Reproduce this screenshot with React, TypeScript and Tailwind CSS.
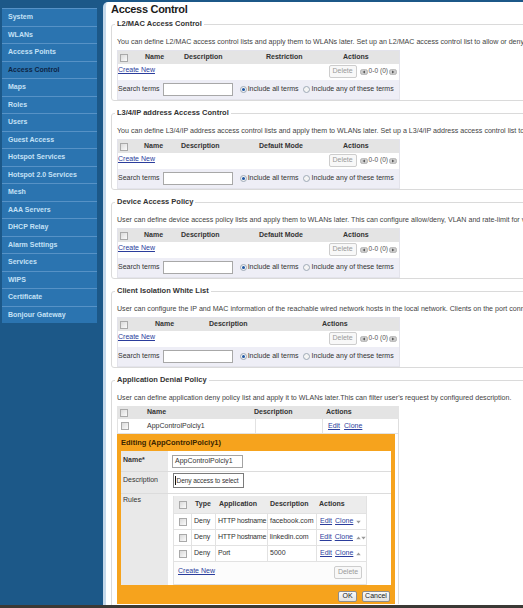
import React from "react";

const NAV = [
  "System",
  "WLANs",
  "Access Points",
  "Access Control",
  "Maps",
  "Roles",
  "Users",
  "Guest Access",
  "Hotspot Services",
  "Hotspot 2.0 Services",
  "Mesh",
  "AAA Servers",
  "DHCP Relay",
  "Alarm Settings",
  "Services",
  "WIPS",
  "Certificate",
  "Bonjour Gateway",
];

function Checkbox() {
  return (
    <span className="block w-[8px] h-[8px] border border-[#a9a9a9] bg-gradient-to-br from-[#dadada] to-[#fbfbfb]" />
  );
}

function Radio({ checked }: { checked?: boolean }) {
  return (
    <span className="flex items-center justify-center w-[7px] h-[7px] rounded-full border border-[#9ea9b6] bg-[#f4f4f4]">
      {checked && <span className="block w-[3px] h-[3px] rounded-full bg-[#1f57a5]" />}
    </span>
  );
}

function PagerIcon({ dir }: { dir: "l" | "r" }) {
  return (
    <svg width="8" height="6" viewBox="0 0 8 6">
      <rect x="0.4" y="0.4" width="7.2" height="5.2" rx="2.2" fill="#cdcdcd" stroke="#9a9a9a" strokeWidth="0.6" />
      {dir === "l" ? (
        <path d="M5 1.6 L2.6 3 L5 4.4Z" fill="#5a5a5a" />
      ) : (
        <path d="M3 1.6 L5.4 3 L3 4.4Z" fill="#5a5a5a" />
      )}
    </svg>
  );
}

function Pager() {
  return (
    <div className="flex items-center gap-[1px] text-[6.6px] leading-none text-[#555]">
      <PagerIcon dir="l" />
      <span>0-0 (0)</span>
      <PagerIcon dir="r" />
    </div>
  );
}

function DeleteBtn() {
  return (
    <div className="w-[28px] h-[13px] border border-[#cdcdcd] bg-[#f8f8f8] rounded-[2px] flex items-center justify-center text-[7px] text-[#9a9a9a]">
      Delete
    </div>
  );
}

function LinkText({ children, className = "" }: { children: React.ReactNode; className?: string }) {
  return <span className={"text-[#2b3d9c] underline whitespace-nowrap " + className}>{children}</span>;
}

function ArrowDown() {
  return (
    <svg width="5" height="4" viewBox="0 0 5 4">
      <path d="M0.3 0.8 L4.7 0.8 L2.5 3.4Z" fill="#9a9a9a" />
    </svg>
  );
}
function ArrowUp() {
  return (
    <svg width="5" height="4" viewBox="0 0 5 4">
      <path d="M0.3 3.2 L4.7 3.2 L2.5 0.6Z" fill="#9a9a9a" />
    </svg>
  );
}

type Col = { label: string; cls: string };

function Section({ title, desc, cbCls, cols }: { title: string; desc: string; cbCls: string; cols: Col[] }) {
  return (
    <fieldset className="ml-[5px] mb-[7px] w-[700px] border border-[#dadada] rounded-[3px] pl-[5px]">
      <legend className="-ml-[2px] px-[2px] text-[7.5px] leading-[10px] font-bold text-[#333]">{title}</legend>
      <div className="mt-[8px] h-[10px] leading-[10px] text-[7.1px] text-[#444] whitespace-nowrap">{desc}</div>
      <div className="mt-[3px] w-[283px] border border-[#e3e3eb] text-[7px] text-[#333]">
        <div className="flex items-center h-[13px] bg-[#e4e4e4] font-bold">
          <div className={cbCls + " pl-[2px]"}>
            <Checkbox />
          </div>
          {cols.map((c) => (
            <div key={c.label} className={c.cls + " whitespace-nowrap"}>
              {c.label}
            </div>
          ))}
        </div>
        <div className="flex items-start justify-between h-[16px] pt-[1px] bg-white pr-[2px]">
          <LinkText className="leading-[10px]">Create New</LinkText>
          <div className="flex items-center gap-[3px]">
            <DeleteBtn />
            <Pager />
          </div>
        </div>
        <div className="flex items-center h-[19px] bg-[#eeeef6] whitespace-nowrap">
          <span>Search terms</span>
          <div className="ml-[3px] w-[70px] h-[13px] border border-[#a8a8a8] bg-white" />
          <div className="ml-[7px]">
            <Radio checked />
          </div>
          <span className="ml-[1px]">Include all terms</span>
          <div className="ml-[4px]">
            <Radio />
          </div>
          <span className="ml-[2px]">Include any of these terms</span>
        </div>
      </div>
    </fieldset>
  );
}

const RULES = [
  { app: "HTTP hostname", desc: "facebook.com", up: false, down: true },
  { app: "HTTP hostname", desc: "linkedin.com", up: true, down: true },
  { app: "Port", desc: "5000", up: true, down: false },
];

function ApplicationSection() {
  return (
    <fieldset className="ml-[5px] w-[700px] border border-[#dadada] rounded-[3px] pl-[5px] pb-[20px]">
      <legend className="-ml-[2px] px-[2px] text-[7.5px] leading-[10px] font-bold text-[#333]">
        Application Denial Policy
      </legend>
      <div className="mt-[8px] h-[10px] leading-[10px] text-[7.1px] text-[#444] whitespace-nowrap">
        User can define application deny policy list and apply it to WLANs later.This can filter user's request by
        configured description.
      </div>
      <div className="mt-[3px] w-[282px] text-[7px] text-[#333]">
        <div className="flex items-center h-[13px] bg-[#e4e4e4] font-bold">
          <div className="w-[30px] pl-[3px]">
            <Checkbox />
          </div>
          <div className="w-[107px]">Name</div>
          <div className="w-[72px]">Description</div>
          <div className="flex-1">Actions</div>
        </div>
        <div className="border-r border-[#dedede]">
          <div className="flex h-[15px] bg-white border-l border-b border-[#e2e2e2]">
            <div className="w-[23px] pl-[3px] flex items-center">
              <Checkbox />
            </div>
            <div className="w-[114px] pl-[6px] flex items-center">AppControlPolciy1</div>
            <div className="w-[68px] border-l border-r border-[#e2e2e2]" />
            <div className="flex-1 pl-[5px] flex items-center gap-[4px]">
              <LinkText>Edit</LinkText>
              <LinkText>Clone</LinkText>
            </div>
          </div>
          <div className="w-[278px] bg-[#f6a31d] px-[4px]">
            <div className="h-[17px] flex items-center text-[7.5px] font-bold text-[#3a2500]">
              Editing (AppControlPolciy1)
            </div>
            <div className="bg-white">
              <div className="flex h-[21px] border-b border-[#dcdcdc]">
                <div className="w-[47px] bg-[#e9e9e9] pl-[2px] pt-[4px] leading-[10px] font-bold">Name*</div>
                <div className="flex-1 pl-[4px] pt-[4px]">
                  <div className="w-[71px] h-[13px] border border-[#a3a3a3] bg-white pl-[2px] flex items-center whitespace-nowrap overflow-hidden">
                    AppControlPolciy1
                  </div>
                </div>
              </div>
              <div className="flex h-[22px] border-b border-[#dcdcdc]">
                <div className="w-[47px] bg-[#e9e9e9] pl-[2px] pt-[3px] leading-[10px]">Description</div>
                <div className="flex-1 pl-[5px] pt-[1px]">
                  <div className="w-[71px] h-[15px] border border-[#7b7b7b] bg-white pl-[1px] flex items-center whitespace-nowrap overflow-hidden text-[6.6px] tracking-[-0.1px]">
                    <span className="block w-[1px] h-[9px] bg-[#111] mr-[0.5px] shrink-0" />
                    Deny access to select
                  </div>
                </div>
              </div>
              <div className="flex h-[91px]">
                <div className="w-[47px] bg-[#e9e9e9] pl-[2px] pt-[1px] leading-[10px]">Rules</div>
                <div className="flex-1 pl-[5px] pt-[2px]">
                  <div className="w-[194px] border-l border-r border-b border-[#e2e2e2]">
                    <div className="flex items-center h-[17px] bg-[#ececec] font-bold">
                      <div className="w-[18px] pl-[5px]">
                        <Checkbox />
                      </div>
                      <div className="w-[24px] pl-[3px]">Type</div>
                      <div className="w-[52px] pl-[3px]">Application</div>
                      <div className="w-[49px] pl-[2px]">Description</div>
                      <div className="flex-1 pl-[2px]">Actions</div>
                    </div>
                    {RULES.map((r, i) => (
                      <div key={i} className="flex h-[16px] border-t border-[#e2e2e2] whitespace-nowrap">
                        <div className="w-[18px] pl-[5px] flex items-center border-r border-[#e2e2e2]">
                          <Checkbox />
                        </div>
                        <div className="w-[24px] pl-[2px] flex items-center border-r border-[#e2e2e2]">Deny</div>
                        <div className="w-[52px] pl-[2px] flex items-center border-r border-[#e2e2e2] tracking-[-0.2px]">
                          {r.app}
                        </div>
                        <div className="w-[49px] pl-[2px] flex items-center border-r border-[#e2e2e2]">{r.desc}</div>
                        <div className="flex-1 pl-[3px] flex items-center gap-[3px]">
                          <LinkText>Edit</LinkText>
                          <LinkText>Clone</LinkText>
                          <span className="flex items-center">
                            {r.up && <ArrowUp />}
                            {r.down && <ArrowDown />}
                          </span>
                        </div>
                      </div>
                    ))}
                    <div className="flex items-start justify-between h-[23px] border-t border-[#e2e2e2] pt-[4px] pl-[4px] pr-[4px] bg-[#fcfcfc]">
                      <LinkText className="leading-[10px]">Create New</LinkText>
                      <DeleteBtn />
                    </div>
                  </div>
                </div>
              </div>
            </div>
            <div className="h-[19px] flex items-center justify-end gap-[5px] pt-[3px] pr-[1px]">
              <div className="w-[19px] h-[11px] border border-[#8d8d8d] bg-gradient-to-b from-[#fafafa] to-[#e2e2e2] rounded-[2px] flex items-center justify-center text-[7px] text-[#222]">
                OK
              </div>
              <div className="w-[28px] h-[11px] border border-[#8d8d8d] bg-gradient-to-b from-[#fafafa] to-[#e2e2e2] rounded-[2px] flex items-center justify-center text-[7px] text-[#222]">
                Cancel
              </div>
            </div>
          </div>
        </div>
      </div>
    </fieldset>
  );
}

export default function App() {
  return (
    <div className="w-[523px] h-[608px] overflow-hidden flex flex-col bg-[#1c5888] font-['Liberation_Sans',Arial,Helvetica,sans-serif]">
      <div className="flex flex-1 min-h-0">
        <div className="w-[103px] shrink-0 pt-[8px] pl-[2px]">
          {NAV.map((n) => (
            <div
              key={n}
              className={
                "h-[17.5px] w-[95px] flex items-center pl-[6px] bg-[#2b74b0] border-t border-[#5792c6] text-[7px] font-bold whitespace-nowrap " +
                (n === "Access Control" ? "text-[#0d2545]" : "text-[#c4e1f6]")
              }
            >
              {n}
            </div>
          ))}
        </div>
        <div className="flex-1 min-w-0 mt-[2px] bg-white border-l-[3px] border-[#c4d8ea] rounded-tl-[5px] overflow-hidden">
          <div className="pl-[5px] h-[14px] leading-[14px] text-[11px] font-bold tracking-[-0.3px] text-[#1b1b1b]">
            Access Control
          </div>
          <div className="mt-[3px]">
            <Section
              title="L2/MAC Access Control"
              desc="You can define L2/MAC access control lists and apply them to WLANs later. Set up an L2/MAC access control list to allow or deny wireless clients based on their MAC addresses."
              cbCls="w-[27px]"
              cols={[
                { label: "Name", cls: "w-[39px]" },
                { label: "Description", cls: "w-[82px]" },
                { label: "Restriction", cls: "w-[77px]" },
                { label: "Actions", cls: "flex-1" },
              ]}
            />
            <Section
              title="L3/4/IP address Access Control"
              desc="You can define L3/4/IP address access control lists and apply them to WLANs later. Set up a L3/4/IP address access control list to allow or deny wireless clients based on IP addresses."
              cbCls="w-[26px]"
              cols={[
                { label: "Name", cls: "w-[37px]" },
                { label: "Description", cls: "w-[78px]" },
                { label: "Default Mode", cls: "w-[84px]" },
                { label: "Actions", cls: "flex-1" },
              ]}
            />
            <Section
              title="Device Access Policy"
              desc="User can define device access policy lists and apply them to WLANs later. This can configure allow/deny, VLAN and rate-limit for various device types."
              cbCls="w-[26px]"
              cols={[
                { label: "Name", cls: "w-[37px]" },
                { label: "Description", cls: "w-[78px]" },
                { label: "Default Mode", cls: "w-[84px]" },
                { label: "Actions", cls: "flex-1" },
              ]}
            />
            <Section
              title="Client Isolation White List"
              desc="User can configure the IP and MAC information of the reachable wired network hosts in the local network. Clients on the port connected to the AP can only access these hosts."
              cbCls="w-[37px]"
              cols={[
                { label: "Name", cls: "w-[54px]" },
                { label: "Description", cls: "w-[113px]" },
                { label: "Actions", cls: "flex-1" },
              ]}
            />
            <ApplicationSection />
          </div>
        </div>
      </div>
      <div className="h-[3px] shrink-0 bg-[#3b3935]" />
    </div>
  );
}
